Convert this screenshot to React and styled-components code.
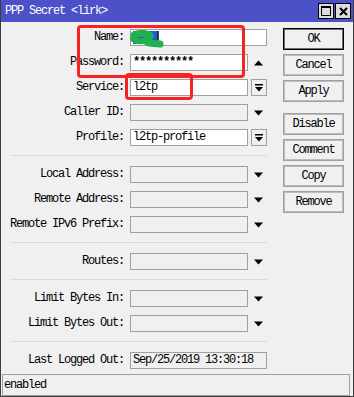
import React from "react";
import styled, { createGlobalStyle } from "styled-components";

const Global = createGlobalStyle`
  html, body { margin: 0; padding: 0; background: #ffffff; }
  body { font-family: "Liberation Mono", "DejaVu Sans Mono", monospace; }
`;

const Window = styled.div`
  position: relative;
  width: 354px;
  height: 397px;
  box-sizing: border-box;
  background: #f0f0f0;
  border: 1px solid #3c3c3c;
  border-top: none;
  display: flex;
  flex-direction: column;
  font-family: "Liberation Mono", "DejaVu Sans Mono", monospace;
  font-size: 12px;
  letter-spacing: -1.2px;
  color: #000;
  overflow: hidden;
`;

const TitleBar = styled.div`
  height: 22px;
  flex: none;
  background: #4c51c8;
  display: flex;
  align-items: center;
  padding: 0 2px 0 4px;
  gap: 1px;
`;

const Title = styled.div`
  flex: 1;
  color: #ffffff;
  line-height: 22px;
`;

const TitleButton = styled.div`
  width: 16px;
  height: 16px;
  box-sizing: border-box;
  border: 1px solid #000;
  background: #dcdcdc;
  display: flex;
  align-items: center;
  justify-content: center;
`;

const Body = styled.div`
  display: flex;
  padding-top: 6px;
`;

const Form = styled.div`
  display: flex;
  flex-direction: column;
  padding-top: 1px;
  width: 266px;
`;

const Group = styled.div`
  display: flex;
  flex-direction: column;
  gap: 8px;
`;

const Row = styled.div`
  display: flex;
  align-items: center;
  height: 17px;
`;

const Label = styled.div`
  width: 123px;
  margin-right: 6px;
  text-align: right;
  white-space: nowrap;
  line-height: 17px;
`;

const Field = styled.div`
  width: ${(p) => (p.$full ? "137px" : "118px")};
  height: 17px;
  box-sizing: border-box;
  border: 1px solid #a0a0a0;
  background: ${(p) => (p.$white ? "#ffffff" : "#f0f0f0")};
  padding-left: 2px;
  line-height: 15px;
  white-space: nowrap;
  overflow: hidden;
  font-weight: ${(p) => (p.$masked ? "bold" : "normal")};
`;

const Side = styled.div`
  width: 19px;
  height: 17px;
  display: flex;
  align-items: center;
  justify-content: ${(p) => (p.$button ? "flex-end" : "center")};
  padding-left: ${(p) => (p.$button ? "0" : "2px")};
  box-sizing: border-box;
`;

const DropButton = styled.div`
  width: 16px;
  height: 17px;
  box-sizing: border-box;
  border: 1px solid #a0a0a0;
  background: #f0f0f0;
  display: flex;
  align-items: center;
  justify-content: center;
`;

const Separator = styled.div`
  height: 1px;
  background: #dadada;
  margin: 9px 0 10px 9px;
  width: 257px;
`;

const Buttons = styled.div`
  margin-left: 16px;
  width: 61px;
  display: flex;
  flex-direction: column;
  gap: 4px;
`;

const Button = styled.div`
  height: 22px;
  box-sizing: border-box;
  border: 1px solid ${(p) => (p.$default ? "#000000" : "#a0a0a0")};
  box-shadow: inset 0 0 0 1px ${(p) => (p.$default ? "#6e6e6e" : "#bcbcbc")};
  background: #f0f0f0;
  display: flex;
  align-items: center;
  justify-content: center;
  margin-top: ${(p) => (p.$spaced ? "7px" : "0")};
`;

const StatusBar = styled.div`
  margin: auto 3px 0 1px;
  height: 22px;
  box-sizing: border-box;
  border: 1px solid #a0a0a0;
  padding-left: 1px;
  line-height: 20px;
`;

const Annotation = styled.div`
  position: absolute;
  box-sizing: border-box;
  border: 3px solid #f82222;
  border-radius: 4px;
  pointer-events: none;
`;

const Scribble = styled.svg`
  position: absolute;
  left: 129px;
  top: 30px;
`;

const DownArrow = () => (
  <svg width="9" height="6" viewBox="0 0 9 6">
    <polygon points="0,0.5 9,0.5 4.5,5.5" fill="#000" />
  </svg>
);

const UpArrow = () => (
  <svg width="9" height="6" viewBox="0 0 9 6">
    <polygon points="0,5.5 9,5.5 4.5,0.5" fill="#000" />
  </svg>
);

const DropIcon = () => (
  <svg width="8" height="8" viewBox="0 0 8 8">
    <rect x="0" y="0" width="8" height="1.5" fill="#000" />
    <polygon points="0,3 8,3 4,7.5" fill="#000" />
  </svg>
);

const FieldRow = ({ label, value, white, full, side, masked }) => (
  <Row>
    <Label>{label}</Label>
    <Field $white={white} $full={full} $masked={masked}>{value}</Field>
    {side === "down" && (
      <Side>
        <DownArrow />
      </Side>
    )}
    {side === "up" && (
      <Side>
        <UpArrow />
      </Side>
    )}
    {side === "drop" && (
      <Side $button>
        <DropButton>
          <DropIcon />
        </DropButton>
      </Side>
    )}
  </Row>
);

export default function App() {
  return (
    <>
      <Global />
      <Window>
        <TitleBar>
          <Title>PPP Secret &lt;lirk&gt;</Title>
          <TitleButton>
            <svg width="10" height="10" viewBox="0 0 10 10">
              <rect x="0.5" y="0.5" width="9" height="9" fill="none" stroke="#000" />
              <rect x="0" y="0" width="10" height="2" fill="#000" />
            </svg>
          </TitleButton>
          <TitleButton>
            <svg width="9" height="9" viewBox="0 0 9 9">
              <path d="M1 1 L8 8 M8 1 L1 8" stroke="#000" strokeWidth="2" />
            </svg>
          </TitleButton>
        </TitleBar>
        <Body>
          <Form>
            <Group>
              <FieldRow label="Name:" value="" white full />
              <FieldRow label="Password:" value="**********" white masked side="up" />
              <FieldRow label="Service:" value="l2tp" white side="drop" />
              <FieldRow label="Caller ID:" value="" side="down" />
              <FieldRow label="Profile:" value="l2tp-profile" white side="drop" />
            </Group>
            <Separator />
            <Group>
              <FieldRow label="Local Address:" value="" side="down" />
              <FieldRow label="Remote Address:" value="" side="down" />
              <FieldRow label="Remote IPv6 Prefix:" value="" side="down" />
            </Group>
            <Separator />
            <Group>
              <FieldRow label="Routes:" value="" side="down" />
            </Group>
            <Separator />
            <Group>
              <FieldRow label="Limit Bytes In:" value="" side="down" />
              <FieldRow label="Limit Bytes Out:" value="" side="down" />
            </Group>
            <Separator />
            <Group>
              <FieldRow label="Last Logged Out:" value="Sep/25/2019 13:30:18" full />
            </Group>
          </Form>
          <Buttons>
            <Button $default>OK</Button>
            <Button>Cancel</Button>
            <Button>Apply</Button>
            <Button $spaced>Disable</Button>
            <Button>Comment</Button>
            <Button>Copy</Button>
            <Button>Remove</Button>
          </Buttons>
        </Body>
        <StatusBar>enabled</StatusBar>

        <Scribble width="34" height="18" viewBox="0 0 34 18">
          <rect x="3" y="1" width="25" height="13" fill="#1f5fd0" />
          <rect x="27.5" y="1" width="1.2" height="13" fill="#000" />
          <path
            d="M4 5 C 9 3, 15 3, 19 5 C 23 7, 15 9, 17 12 C 19 14, 25 13, 30 14"
            stroke="#22b14c"
            strokeWidth="7"
            strokeLinecap="round"
            fill="none"
          />
          <path d="M3 9 C 8 12, 13 12, 18 9" stroke="#22b14c" strokeWidth="6" strokeLinecap="round" fill="none" />
        </Scribble>
        <Annotation style={{ left: 76, top: 25, width: 168, height: 53 }} />
        <Annotation style={{ left: 124, top: 73, width: 68, height: 27 }} />
      </Window>
    </>
  );
}
